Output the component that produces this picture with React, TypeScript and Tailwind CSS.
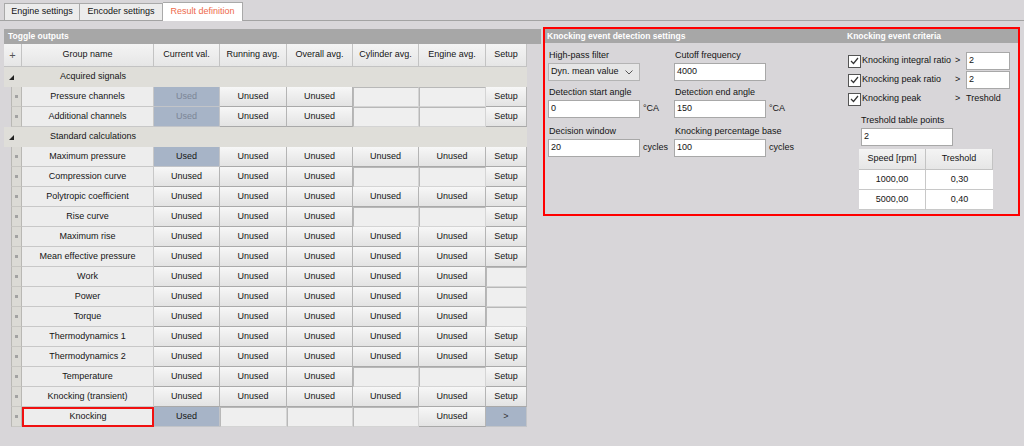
import React from "react"

type Kind = "used" | "usedDim" | "unused" | "empty" | "setup" | "next"

type Row = { name: string; cells: Kind[] }

type Group = { title: string; rows: Row[] }

const COLS = "grid grid-cols-[18px_132px_66px_67px_66px_66px_67px_41px]"

const U: Kind = "unused"
const E: Kind = "empty"

const groups: Group[] = [
  {
    title: "Acquired signals",
    rows: [
      { name: "Pressure channels", cells: ["usedDim", U, U, E, E, "setup"] },
      { name: "Additional channels", cells: ["usedDim", U, U, E, E, "setup"] },
    ],
  },
  {
    title: "Standard calculations",
    rows: [
      { name: "Maximum pressure", cells: ["used", U, U, U, U, "setup"] },
      { name: "Compression curve", cells: [U, U, U, E, E, "setup"] },
      { name: "Polytropic coefficient", cells: [U, U, U, U, U, "setup"] },
      { name: "Rise curve", cells: [U, U, U, E, E, "setup"] },
      { name: "Maximum rise", cells: [U, U, U, U, U, "setup"] },
      { name: "Mean effective pressure", cells: [U, U, U, U, U, "setup"] },
      { name: "Work", cells: [U, U, U, U, U, E] },
      { name: "Power", cells: [U, U, U, U, U, E] },
      { name: "Torque", cells: [U, U, U, U, U, E] },
      { name: "Thermodynamics 1", cells: [U, U, U, U, U, "setup"] },
      { name: "Thermodynamics 2", cells: [U, U, U, U, U, "setup"] },
      { name: "Temperature", cells: [U, U, U, E, E, "setup"] },
      { name: "Knocking (transient)", cells: [U, U, U, U, U, "setup"] },
      { name: "Knocking", cells: ["used", E, E, E, U, "next"] },
    ],
  },
]

function Cell({ kind }: { kind: Kind }) {
  switch (kind) {
    case "used":
      return (
        <div className="flex items-center justify-center border-r border-b border-[#c2c4c8] bg-[#a7b4c7] text-[#151515]">
          Used
        </div>
      )
    case "usedDim":
      return (
        <div className="flex items-center justify-center border-r border-b border-[#c2c4c8] bg-[#a7b4c7] text-[#7b8596]">
          Used
        </div>
      )
    case "next":
      return (
        <div className="flex items-center justify-center border-r border-b border-[#c2c4c8] bg-[#a7b4c7] text-[#333]">
          &gt;
        </div>
      )
    case "empty":
      return <div className="border border-t-[#b8b8b8] border-l-[#b8b8b8] border-r-[#d4d4d4] border-b-[#d4d4d4] bg-[#efefef]" />
    default:
      return (
        <div className="flex items-center justify-center border-r border-b border-r-[#b4b4b4] border-b-[#a9a9a9] bg-linear-to-b from-[#f7f7f7] to-[#e3e3e3]">
          {kind === "setup" ? "Setup" : "Unused"}
        </div>
      )
  }
}

function Triangle() {
  return (
    <svg width="5" height="5" viewBox="0 0 5 5" className="ml-[5px]">
      <polygon points="5,0 5,5 0,5" fill="#222" />
    </svg>
  )
}

function ToggleOutputs() {
  const heads = ["Current val.", "Running avg.", "Overall avg.", "Cylinder avg.", "Engine avg.", "Setup"]
  return (
    <div className="w-[537px]">
      <div className="flex h-[15px] items-center bg-[#a7a7a7] pl-[4px] text-[8.5px] font-bold text-white">
        Toggle outputs
      </div>
      <div className="w-[523px] bg-[#dfded9]">
        <div className={`${COLS} h-[23px]`}>
          <div className="flex items-center justify-center border-r border-b border-[#c3c3c3] bg-linear-to-b from-[#f4f4f4] to-[#e6e6e6] text-[11px] text-[#555]">
            +
          </div>
          <div className="flex items-center justify-center border-r border-b border-[#c3c3c3] bg-linear-to-b from-[#f4f4f4] to-[#e6e6e6]">
            Group name
          </div>
          {heads.map((h) => (
            <div
              key={h}
              className="flex items-center justify-center border-r border-b border-[#c3c3c3] bg-linear-to-b from-[#f4f4f4] to-[#e6e6e6]"
            >
              {h}
            </div>
          ))}
        </div>
        {groups.map((g) => (
          <div key={g.title}>
            <div className={`${COLS} h-5 items-center`}>
              <Triangle />
              <div className="pl-[10px] text-center">{g.title}</div>
            </div>
            {g.rows.map((r) => (
              <div key={r.name} className={`${COLS} h-5`}>
                <div className="flex">
                  <div className="w-[7px] bg-[#d8d6d9]" />
                  <div className="flex flex-1 items-center justify-center border-x border-b border-x-[#b9b8b4] border-b-[#c8c7c3] bg-[#dbdad5]">
                    <span className="size-[3px] bg-[#a3a3a3]" />
                  </div>
                </div>
                {r.name === "Knocking" ? (
                  <div className="flex items-center justify-center border-2 border-[#f01010] bg-[#ededed]">
                    {r.name}
                  </div>
                ) : (
                  <div className="flex items-center justify-center border-r border-b border-[#c8c8c8] bg-[#ededed]">
                    {r.name}
                  </div>
                )}
                {r.cells.map((c, i) => (
                  <Cell key={i} kind={c} />
                ))}
              </div>
            ))}
          </div>
        ))}
      </div>
    </div>
  )
}

function TextBox({ value, w }: { value: string; w: string }) {
  return (
    <div className={`${w} flex h-[18px] items-center border border-[#a8a8a8] bg-white pl-[2px]`}>
      {value}
    </div>
  )
}

function Field({ label, value, unit }: { label: string; value: string; unit?: string }) {
  return (
    <div className="w-[126px]">
      <div className="h-[13px] pl-[1px] leading-[13px]">{label}</div>
      <div className="mt-[1px] flex items-center gap-[3px]">
        <TextBox value={value} w="w-[92px]" />
        {unit && <span>{unit}</span>}
      </div>
    </div>
  )
}

function Check() {
  return (
    <div className="flex size-[13px] shrink-0 items-center justify-center border border-[#555] bg-white">
      <svg width="9" height="8" viewBox="0 0 9 8">
        <path d="M1 4 L3.5 6.5 L8 1" fill="none" stroke="#333" strokeWidth="1.2" />
      </svg>
    </div>
  )
}

function Detection() {
  return (
    <div className="w-[300px] pl-[3px]">
      <div className="mt-[6px] flex">
        <div className="w-[126px]">
          <div className="h-[13px] pl-[1px] leading-[13px]">High-pass filter</div>
          <div className="mt-[1px] flex h-[18px] w-[92px] items-center justify-between border border-[#b4b4b4] bg-[#e6e6e6] pl-[2px] pr-[6px]">
            <span>Dyn. mean value</span>
            <svg width="8" height="5" viewBox="0 0 8 5">
              <path d="M0.5 0.5 L4 4 L7.5 0.5" fill="none" stroke="#555" strokeWidth="1" />
            </svg>
          </div>
        </div>
        <Field label="Cutoff frequency" value="4000" />
      </div>
      <div className="mt-[5px] flex">
        <Field label="Detection start angle" value="0" unit="°CA" />
        <Field label="Detection end angle" value="150" unit="°CA" />
      </div>
      <div className="mt-[7px] flex">
        <Field label="Decision window" value="20" unit="cycles" />
        <Field label="Knocking percentage base" value="100" unit="cycles" />
      </div>
    </div>
  )
}

function Criteria() {
  const checks = ["Knocking integral ratio", "Knocking peak ratio"]
  return (
    <div className="w-[173px] pl-[3px]">
      <div className="mt-[9px] flex flex-col gap-[1px]">
        {checks.map((c) => (
          <div key={c} className="flex h-[18px] items-center">
            <Check />
            <span className="w-[94px] pl-[1px]">{c}</span>
            <span className="w-[11px]">&gt;</span>
            <TextBox value="2" w="w-[44px]" />
          </div>
        ))}
        <div className="flex h-[18px] items-center">
          <Check />
          <span className="w-[94px] pl-[1px]">Knocking peak</span>
          <span className="w-[11px]">&gt;</span>
          <span>Treshold</span>
        </div>
      </div>
      <div className="ml-[13px] mt-[6px]">
        <div className="h-[13px] leading-[13px]">Treshold table points</div>
        <div className="mt-[1px]">
          <TextBox value="2" w="w-[92px]" />
        </div>
        <div className="-ml-[2px] mt-[3px] w-[134px]">
          <div className="grid h-[21px] grid-cols-[67px_67px]">
            <div className="flex items-center justify-center border-r border-b border-[#c3c3c3] bg-linear-to-b from-[#f4f4f4] to-[#e6e6e6]">
              Speed [rpm]
            </div>
            <div className="flex items-center justify-center border-r border-b border-[#c3c3c3] bg-linear-to-b from-[#f4f4f4] to-[#e6e6e6]">
              Treshold
            </div>
          </div>
          {[
            ["1000,00", "0,30"],
            ["5000,00", "0,40"],
          ].map(([a, b]) => (
            <div key={a} className="grid h-5 grid-cols-[67px_67px] bg-white">
              <div className="flex items-center justify-center border-r border-b border-[#c8c8c8]">{a}</div>
              <div className="flex items-center justify-center border-b border-[#c8c8c8]">{b}</div>
            </div>
          ))}
        </div>
      </div>
    </div>
  )
}

export default function App() {
  return (
    <div className="h-[446px] w-[1024px] overflow-hidden whitespace-nowrap bg-[#d8d6d9] font-['Liberation_Sans',sans-serif] text-[9px] text-[#141414]">
      <div className="flex h-[21px] items-end border-b border-[#a3a3a3] pl-[4px]">
        <div className="flex h-[17px] w-[76px] items-center justify-center border border-b-0 border-[#a9a9a9] bg-[#ececec]">
          Engine settings
        </div>
        <div className="flex h-[17px] w-[83px] items-center justify-center border border-b-0 border-l-0 border-[#a9a9a9] bg-[#ececec]">
          Encoder settings
        </div>
        <div className="-mb-px flex h-[19px] w-[80px] items-center justify-center border border-b-0 border-l-0 border-[#a9a9a9] bg-white text-[#ee6a4c]">
          Result definition
        </div>
      </div>
      <div className="flex items-start gap-[2px] pl-[4px] pt-[6px]">
        <div className="mt-[2px]">
          <ToggleOutputs />
        </div>
        <div className="h-[189px] w-[477px] border-2 border-[#ff0000]">
          <div className="flex h-[14px] items-center bg-[#a7a7a7] text-[8.5px] font-bold text-white">
            <div className="w-[300px] pl-[2px]">Knocking event detection settings</div>
            <div className="pl-[2px]">Knocking event criteria</div>
          </div>
          <div className="flex">
            <Detection />
            <Criteria />
          </div>
        </div>
      </div>
    </div>
  )
}
